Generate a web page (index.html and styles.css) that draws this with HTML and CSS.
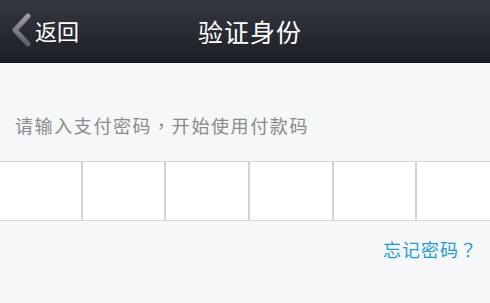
FILE: index.html
```html
<!DOCTYPE html>
<html lang="zh-CN">
<head>
    <meta charset="UTF-8">
    <meta name="viewport" content="width=device-width, initial-scale=1.0">
    <title>验证身份</title>
    <link rel="stylesheet" href="styles.css">
</head>
<body>

    <!-- 顶部导航 -->
    <div class="header">
        <a class="back" href="#">
            <svg class="back-icon" width="22" height="34" viewBox="0 0 22 34">
                <defs>
                    <linearGradient id="chev" x1="0" y1="0" x2="0" y2="1">
                        <stop offset="0" stop-color="#9a9ca2"/>
                        <stop offset="1" stop-color="#5e6067"/>
                    </linearGradient>
                </defs>
                <path d="M18 3 L5 17 L18 31" fill="none" stroke="url(#chev)" stroke-width="5" stroke-linecap="round" stroke-linejoin="round"/>
            </svg>
            <span>返回</span>
        </a>
        <h1>验证身份</h1>
    </div>

    <!-- 密码输入 -->
    <div class="content">
        <p class="tip">请输入支付密码<span class="punct" lang="zh-TW">，</span>开始使用付款码</p>
        <div class="pwd-box">
            <div class="pwd-cell"></div>
            <div class="pwd-cell"></div>
            <div class="pwd-cell"></div>
            <div class="pwd-cell"></div>
            <div class="pwd-cell"></div>
            <div class="pwd-cell"></div>
        </div>
        <div class="forget">
            <a href="#">忘记密码<span class="punct" lang="zh-TW">？</span></a>
        </div>
    </div>

</body>
</html>
```

FILE: styles.css
```css
body {
    margin: 0;
    padding: 0;
    background-color: #f6f7f9;
    font-family: "Noto Sans CJK SC", "Liberation Sans", sans-serif;
    overflow: hidden;
}
.header {
    position: relative;
    height: 62px;
    background: linear-gradient(#353841, #1d1f26);
    border-bottom: 1px solid #121318;
    display: flex;
    align-items: center;
    justify-content: center;
}
.header h1 {
    margin: 0 0 0 10px;
    font-size: 25px;
    font-weight: normal;
    color: #fff;
    letter-spacing: 1px;
}
.back {
    position: absolute;
    left: 10px;
    top: 13px;
    display: flex;
    align-items: center;
    color: #fff;
    text-decoration: none;
    font-size: 22px;
}
.back-icon {
    margin-right: 3px;
}
.punct {
    font-family: "Noto Sans CJK TC", sans-serif;
}
.content {
    padding-top: 1px;
}
.tip {
    margin: 48px 0 0 15px;
    font-size: 18px;
    line-height: 26px;
    color: #8a8a8a;
    letter-spacing: 1.6px;
}
.pwd-box {
    display: flex;
    margin: 23px 0 0 -1px;
    width: 500px;
    height: 58px;
    background: #fff;
    border-top: 1px solid #d6d6d6;
    border-bottom: 1px solid #d6d6d6;
}
.pwd-cell {
    flex: 1;
    border-right: 2px solid #d2d2d2;
}
.pwd-cell:last-child {
    border-right: none;
}
.forget {
    text-align: right;
    padding: 15px 12px 0 0;
}
.forget a {
    font-size: 18px;
    color: #1d9bd6;
    text-decoration: none;
    letter-spacing: 1px;
}
```
